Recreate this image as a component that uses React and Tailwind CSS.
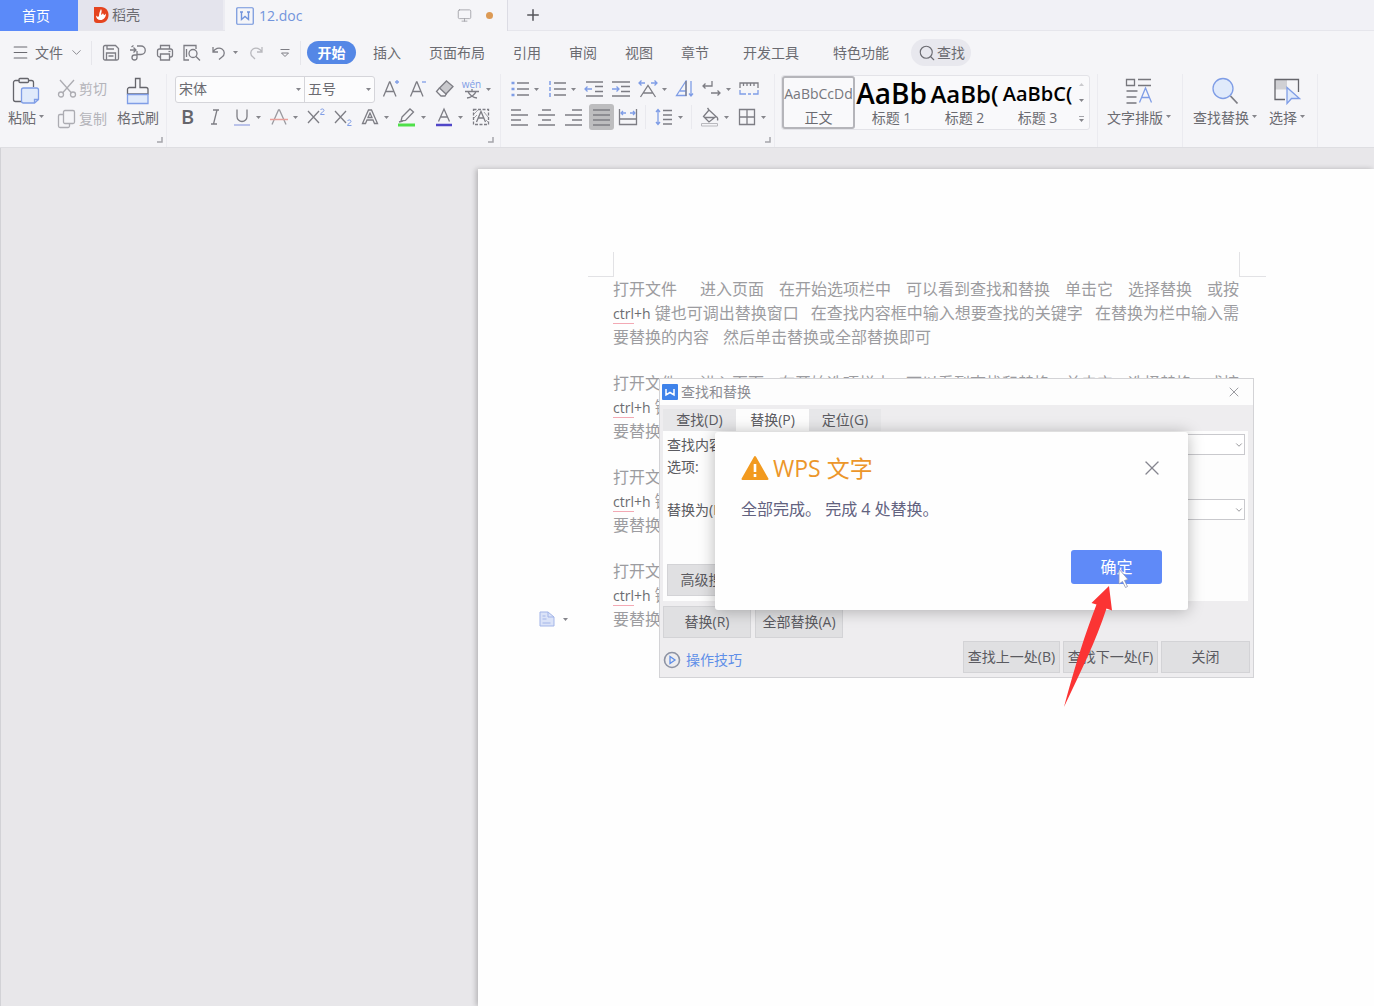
import { ChevronDown, Menu, Monitor, Plus, Search, X } from 'lucide-react';

const GRAY = '#7d7d84';
const BLUE = '#7f9de6';

const Svg = ({ w = 20, h = 20, children, className = '' }) => (
  <svg
    width={w}
    height={h}
    viewBox={`0 0 ${w} ${h}`}
    fill="none"
    stroke={GRAY}
    strokeWidth="1.3"
    className={`shrink-0 ${className}`}
    aria-hidden="true"
  >
    {children}
  </svg>
);

const Caret = ({ className = '' }) => (
  <svg width="5" height="3" viewBox="0 0 5 3" className={`shrink-0 ${className}`} aria-hidden="true">
    <path d="M0 0h5L2.5 3z" fill="#85858b" />
  </svg>
);

const Tool = ({ label, caret, active, children }) => (
  <button
    type="button"
    aria-label={label}
    className={`flex h-7 shrink-0 items-center pl-[2px] ${caret ? 'w-[37px]' : 'w-[27px]'}`}
  >
    <span
      className={`flex justify-center rounded-[3px] ${active ? 'h-[26px] w-[25px] items-center bg-[#bdbdbf]' : 'w-[23px]'}`}
    >
      {children}
    </span>
    {caret && <Caret className="ml-[3px]" />}
  </button>
);

const Rule = () => <span className="mx-1 h-6 w-px shrink-0 bg-[#e9e9ee]" />;

const Launcher = () => (
  <button type="button" aria-label="更多设置" className="mt-[6px] mr-[3px] self-end">
    <svg width="6" height="6" viewBox="0 0 6 6" aria-hidden="true">
      <path d="M5 0v5H0" fill="none" stroke="#a5a5ab" strokeWidth="1.5" />
    </svg>
  </button>
);

/* ---------- quick access icons ---------- */

const SaveIcon = () => (
  <Svg w={18} h={18}>
    <path d="M3 1.5h10.5l3 3v10a1.5 1.5 0 0 1-1.5 1.5H3A1.5 1.5 0 0 1 1.5 14.5V3A1.5 1.5 0 0 1 3 1.5z" />
    <path d="M5 1.5v3.5h7M4.5 16V9h9v7M6.5 12h5" />
  </Svg>
);

const ExportIcon = () => (
  <Svg w={18} h={18}>
    <path d="M1 6h6M4.5 3.5L7 6 4.5 8.5M2.5 3l2-1.5M8 2h4a4.2 4.2 0 0 1 0 8.5H8" />
    <path d="M8 7v6.5a2.5 2.5 0 1 1-2.5-2.5H8" />
  </Svg>
);

const PrintIcon = () => (
  <Svg w={18} h={18}>
    <path d="M4.5 5V1.5h9V5" />
    <rect x="1.5" y="5" width="15" height="8" rx="2" />
    <path d="M4.5 10h9v6h-9z" fill="#f5f5f8" />
    <path d="M12.5 7.5h2" />
  </Svg>
);

const PreviewIcon = () => (
  <Svg w={19} h={18}>
    <path d="M7 16H2V1.5h12V5" />
    <circle cx="11" cy="9.5" r="4" />
    <path d="M14 12.5l4 4M4.5 5v8" />
  </Svg>
);

const UndoIcon = () => (
  <Svg w={16} h={16}>
    <path d="M2 2v5h5M2 7c2-3.5 6-5 9-3s3 6 0 8l-3 2.5" />
  </Svg>
);

const RedoIcon = () => (
  <Svg w={16} h={16} className="opacity-50">
    <path d="M14 2v5H9M14 7c-2-3.5-6-5-9-3s-3 6 0 8l2 2" />
  </Svg>
);

/* ---------- ribbon icons ---------- */

const PasteIcon = () => (
  <Svg w={28} h={28}>
    <path d="M7.5 3.5h-4a2 2 0 0 0-2 2v17a2 2 0 0 0 2 2h6M16 3.5h3.5a2 2 0 0 1 2 2V10" stroke="#65656b" />
    <rect x="7" y="1.5" width="9.5" height="4" rx="1" stroke="#65656b" />
    <path d="M11.5 11h13a2 2 0 0 1 2 2v9.5l-4 3.5H11.5a2 2 0 0 1-2-2V13a2 2 0 0 1 2-2z" fill="#e0eafb" stroke={BLUE} />
    <path d="M22.5 26v-3.5h4" stroke={BLUE} />
  </Svg>
);

const CutIcon = () => (
  <Svg w={20} h={20} className="opacity-60">
    <path d="M3 1l11.5 13M17 1L5.5 14" />
    <circle cx="4" cy="15.5" r="2.5" />
    <circle cx="16" cy="15.5" r="2.5" />
  </Svg>
);

const CopyIcon = () => (
  <Svg w={20} h={20} className="opacity-60">
    <rect x="6.5" y="1.5" width="11" height="13" rx="1.5" />
    <path d="M6 5.5H3A1.5 1.5 0 0 0 1.5 7v10A1.5 1.5 0 0 0 3 18.5h8a1.5 1.5 0 0 0 1.5-1.5v-2" />
  </Svg>
);

const BrushIcon = () => (
  <Svg w={24} h={28}>
    <path d="M9.5 1.5h4.5v9h6a2 2 0 0 1 2 2v4.5H1.5v-4.5a2 2 0 0 1 2-2h6z" stroke="#65656b" />
    <path d="M1.5 17.5h20.5v9H1.5z" fill="#e0eafb" stroke={BLUE} />
  </Svg>
);

const GrowIcon = ({ minus }) => (
  <Svg w={18} h={20}>
    <path d="M1.5 17.5L7.5 3h.5l6 14.5M3.5 12.5h8.5" />
    <path d={minus ? 'M13 3h4' : 'M13 3h4M15 1v4'} stroke={BLUE} />
  </Svg>
);

const EraserIcon = () => (
  <Svg w={20} h={20}>
    <path d="M11.5 2l6.5 5.5L11 15 4.5 9z" fill="#c9c9cd" />
    <path d="M4.5 9L1.5 12.5 6 17h4l1.5-2.5" />
  </Svg>
);

const PinyinIcon = () => (
  <span className="flex flex-col items-center">
    <span className="text-[10px] leading-[9px] text-[#7f9de6]">wén</span>
    <Svg w={16} h={10}>
      <path d="M8 0v2M1 2.5h14M4 2.5c1 3 5 6 9 6.5M12 2.5c-1 3-5 6-9 6.5" />
    </Svg>
  </span>
);

const UnderlineIcon = () => (
  <Svg w={18} h={20}>
    <path d="M4 2.5v7a5 5 0 0 0 10 0v-7" />
    <path d="M1 18h16" stroke="#9aa6e2" />
  </Svg>
);

const StrikeIcon = () => (
  <Svg w={20} h={20}>
    <path d="M3 17.5L9.5 3h1L17 17.5" stroke="#9a9aa0" />
    <path d="M1 12.5h18" stroke="#e8a09b" strokeWidth="1.5" />
  </Svg>
);

const ScriptIcon = ({ sub }) => (
  <Svg w={20} h={20}>
    <path d="M2 4l11 12M13 4L2 16" />
    <path
      d={sub ? 'M14.5 14c.5-1.5 3.5-1.5 3.5.5 0 1.5-3.5 2-3.5 4h4' : 'M14.5 3c.5-1.5 3.5-1.5 3.5.5 0 1.5-3.5 2-3.5 4h4'}
      stroke={BLUE}
      strokeWidth="1"
    />
  </Svg>
);

const OutlineAIcon = () => (
  <Svg w={18} h={20}>
    <path d="M1.5 16.5L7.5 3h3l6 13.5h-3l-1.5-3.5H6L4.5 16.5zM7 10.5L9 6l2 4.5z" />
  </Svg>
);

const HighlightIcon = () => (
  <Svg w={20} h={20}>
    <path d="M5 10l8-8 3.5 3-8 8.5L4 14zM2 15l4-1" />
    <path d="M1 18h17" stroke="#4fe04a" strokeWidth="3" />
  </Svg>
);

const FontColorIcon = () => (
  <Svg w={18} h={20}>
    <path d="M3.5 14.5L9 2l5.5 12.5M5.5 10h7" />
    <path d="M1 18h16" stroke="#5046c8" strokeWidth="2.5" />
  </Svg>
);

const ShadeIcon = () => (
  <Svg w={18} h={18}>
    <rect x="1.5" y="1.5" width="15" height="15" strokeDasharray="3 1.5" />
    <path d="M4.5 14L9 3.5l4.5 10.5M6.5 10h5" />
    <path d="M2 6l4-4M2 10l3-3M16 9l-4-5M16 14l-2-2" strokeWidth=".7" />
  </Svg>
);

const BulletIcon = ({ numbered }) => (
  <Svg w={20} h={18}>
    <path d="M7 3h12M7 9h12M7 15h12" />
    <path d={numbered ? 'M3 1v4M3 7v4M3 13v4' : 'M1.5 3h3M1.5 9h3M1.5 15h3'} stroke={BLUE} strokeWidth={numbered ? 1.5 : 2.5} />
  </Svg>
);

const IndentIcon = ({ right }) => (
  <Svg w={20} h={18}>
    <path d={right ? 'M1 2h18M10 6.5h9M10 11.5h9M1 16h18' : 'M2 2h17M11 6.5h8M11 11.5h8M2 16h17'} />
    <path d={right ? 'M1 9h7M5.5 6.5L8 9l-2.5 2.5' : 'M8 9H1M3.5 6.5L1 9l2.5 2.5'} stroke={BLUE} />
  </Svg>
);

const ScaleIcon = () => (
  <Svg w={20} h={18}>
    <path d="M2.5 17L10 5.5 17.5 17M5.5 13h9" />
    <path d="M1 3h6M3.5 .5L1 3l2.5 2.5M13 3h6M16.5 .5L19 3l-2.5 2.5" stroke={BLUE} />
  </Svg>
);

const SortIcon = () => (
  <Svg w={20} h={18}>
    <path d="M11 1L1.5 15.5H11zM5 11h6" stroke={BLUE} />
    <path d="M11 1v15" />
    <path d="M16 1v15M14 13.5l2 2.5 2-2.5" stroke={BLUE} />
  </Svg>
);

const WrapIcon = () => (
  <Svg w={20} h={18}>
    <path d="M10 1v5H1M3.5 3.5L1 6l2.5 2.5M9 13h9M15.5 10.5L18 13l-2.5 2.5" />
  </Svg>
);

const RulerIcon = () => (
  <Svg w={20} h={16}>
    <path d="M1 7V2h18v5M4.5 2v3M8 2v3M11.5 2v3M15 2v3" />
    <path d="M1 9v4h6M9 13h3M19 9v4h-5" stroke={BLUE} />
  </Svg>
);

const alignPaths = {
  left: 'M1 2h10M1 7h17M1 12h10M1 17h17',
  center: 'M5 2h9M1 7h17M5 12h9M1 17h17',
  right: 'M8 2h10M1 7h17M8 12h10M1 17h17',
  justify: 'M1 2h17M1 7h17M1 12h17M1 17h17',
};

const AlignIcon = ({ type }) => (
  <Svg w={19} h={19}>
    <path d={alignPaths[type]} />
  </Svg>
);

const DistributeIcon = () => (
  <Svg w={20} h={18}>
    <path d="M1.5 1v15.5h17V1M1.5 11h17" />
    <path d="M3 5h5M5 3L3 5l2 2M17 5h-5M15 3l2 2-2 2" stroke={BLUE} />
  </Svg>
);

const SpacingIcon = () => (
  <Svg w={18} h={18}>
    <path d="M8 2.5h9M8 7h9M8 11.5h9M8 16h9" />
    <path d="M3 1.5v15M1 4l2-2.5L5 4M1 14l2 2.5L5 14" stroke={BLUE} />
  </Svg>
);

const FillIcon = () => (
  <Svg w={20} h={20}>
    <path d="M9 3l7 6.5-7 5.5-5.5-5.5zM9 3L7.5 1M16 9.5c2 1 2 2.5 1.5 4M4.5 10.5H15" />
    <path d="M1.5 16.5h16v2.5h-16z" stroke="#b9b9be" strokeWidth="1" />
  </Svg>
);

const BorderIcon = () => (
  <Svg w={18} h={18}>
    <path d="M1.5 1.5h15v15h-15zM9 1.5v15M1.5 9h15" />
  </Svg>
);

const TypesetIcon = () => (
  <Svg w={28} h={28}>
    <path d="M1.5 2.5h8v6h-8zM13 2.5h13M13 8.5h13M1.5 14h11M1.5 20h10M1.5 26h10" stroke="#77777d" />
    <path d="M14.5 25.5L20.5 11l6 14.5M16.5 20.5h8" stroke={BLUE} />
  </Svg>
);

const FindIcon = () => (
  <Svg w={28} h={28}>
    <path d="M19.5 19l7 7.5" strokeWidth="1.8" />
    <circle cx="12" cy="11.5" r="10" fill="#e0eafb" stroke={BLUE} />
  </Svg>
);

const SelectIcon = () => (
  <Svg w={28} h={28}>
    <path d="M2 2.5h12v10H2z" fill="#d0d0d4" stroke="none" />
    <path d="M12 22.5H2v-20h23.5V15" stroke="#65656b" />
    <path d="M14 10.5v16l4.5-5h8z" fill="#e0eafb" stroke={BLUE} />
  </Svg>
);

const WpsMark = () => (
  <svg width="18" height="18" viewBox="0 0 18 18" fill="none" stroke="currentColor" aria-hidden="true">
    <rect x=".75" y=".75" width="16.5" height="16.5" rx="1" strokeWidth="1.2" />
    <path d="M5.5 5v7.5L9 9.5l3.5 3V5M4 5h3M11 5h3" strokeWidth="1.4" />
  </svg>
);

/* ---------- top bars ---------- */

const TabBar = () => (
  <div className="flex h-[31px] items-stretch border-b border-[#e6e6ec] bg-[#f1f1f6]">
    <button type="button" className="-mb-px w-[78px] bg-[#5b8af9] pr-1.5 text-center text-white">
      首页
    </button>
    <button type="button" className="flex w-[147px] items-center gap-[3px] border-r-2 border-[#ececf2] bg-[#e4e4ed] pl-[15px]">
      <svg width="16" height="18" viewBox="0 0 16 18" aria-hidden="true">
        <path d="M1 1h7c5 0 7.5 4 7.5 8s-2.5 8-7.5 8H4c-2 0-3-1-3-3z" fill="#e5441f" />
        <path d="M8 3c1.5 2 0 4 0 6 1-.5 1.5-1 2-2 1 3 2 2 3 .5 0 4-2.5 6.5-5.5 6.5S3 12 3 9.5c1.5 1.5 2.5 1.5 3 .5C6 7 7 5 8 3z" fill="#fff" />
      </svg>
      稻壳
    </button>
    <div className="-mb-px flex w-[283px] items-center border-r border-[#dcdce4] bg-[#f5f5f8] pr-[14px] pl-[11px]">
      <button type="button" className="flex flex-1 items-center gap-[5px] text-[#7294dc]">
        <WpsMark />
        12.doc
      </button>
      <Monitor size={15} strokeWidth={1.3} color="#9b9ba1" />
      <span className="ml-[14px] h-[7px] w-[7px] rounded-full bg-[#dc9a55]" />
    </div>
    <button type="button" aria-label="新建" className="px-4">
      <Plus size={18} strokeWidth={2} color="#55555b" />
    </button>
  </div>
);

const menus = ['插入', '页面布局', '引用', '审阅', '视图', '章节'];

const MenuBar = () => (
  <nav className="flex h-[43px] items-center whitespace-nowrap">
    <button type="button" className="flex items-center pl-[11px]">
      <Menu size={19} strokeWidth={1.3} className="mr-[5px]" />
      文件
      <ChevronDown size={15} strokeWidth={1.2} className="ml-1.5" />
    </button>
    <span className="mr-[5px] ml-[7px] h-6 w-px bg-[#e6e6eb]" />
    <div className="flex items-center">
      <Tool label="保存"><SaveIcon /></Tool>
      <Tool label="输出"><ExportIcon /></Tool>
      <Tool label="打印"><PrintIcon /></Tool>
      <Tool label="预览"><PreviewIcon /></Tool>
      <Tool label="撤销" caret><UndoIcon /></Tool>
      <Tool label="恢复"><RedoIcon /></Tool>
      <button type="button" aria-label="自定义" className="ml-[5px] px-1.5">
        <Svg w={10} h={10}>
          <path d="M.5 1.5h9M1.5 5h7L5 8.5z" strokeWidth="1" />
        </Svg>
      </button>
    </div>
    <span className="mr-1.5 ml-1 h-6 w-px bg-[#e6e6eb]" />
    <button type="button" className="h-[23px] w-[49px] rounded-full bg-[#5487e6] font-bold text-white">
      开始
    </button>
    <div className="ml-[17px] flex gap-7">
      {menus.map((name) => (
        <button type="button" key={name}>{name}</button>
      ))}
    </div>
    <div className="mx-[34px] flex gap-[34px]">
      <button type="button">开发工具</button>
      <button type="button">特色功能</button>
    </div>
    <button type="button" className="-ml-3 flex h-[27px] items-center gap-px rounded-full bg-[#e8e8ee] pr-1.5 pl-[7px]">
      <Search size={18} strokeWidth={1.5} />
      查找
    </button>
  </nav>
);

const FontBox = ({ label, value, className }) => (
  <label className={`flex items-center ${className}`}>
    <select aria-label={label} defaultValue={value} className="h-full w-full appearance-none pl-[3px] outline-none">
      <option>{value}</option>
    </select>
    <Caret className="pointer-events-none mr-[3px]" />
  </label>
);

const styles = [
  { name: '正文', sample: 'AaBbCcDd', size: 'text-[14px] text-[#77777d]', active: true },
  { name: '标题 1', sample: 'AaBb', size: 'text-[28px] font-semibold text-black' },
  { name: '标题 2', sample: 'AaBb(', size: 'text-[24px] font-semibold text-black' },
  { name: '标题 3', sample: 'AaBbC(', size: 'text-[20px] font-semibold text-black' },
];

const BigTool = ({ icon, label }) => (
  <button type="button" className="flex flex-col items-center gap-px">
    {icon}
    <span className="flex items-center gap-[3px] leading-6">
      {label}
      <Caret className="mb-1" />
    </span>
  </button>
);

const Ribbon = () => (
  <div className="flex h-[74px] border-b border-[#dedee2] whitespace-nowrap">
    <section className="flex w-[167px] flex-col border-r border-[#ebebf0] pt-px">
      <div className="flex h-14 pl-2">
        <div className="flex w-[49px] flex-col items-start pt-0.5">
          <button type="button" className="flex flex-col gap-px">
            <span className="pl-1"><PasteIcon /></span>
            <span className="flex items-center gap-[3px] leading-6">粘贴<Caret className="mb-1" /></span>
          </button>
        </div>
        <div className="flex w-[60px] flex-col justify-between text-[#b4b4ba]">
          <button type="button" className="flex h-7 items-center gap-0.5"><CutIcon />剪切</button>
          <button type="button" className="flex h-6 items-center gap-0.5"><CopyIcon />复制</button>
        </div>
        <button type="button" className="flex flex-col items-center gap-px pt-0.5">
          <BrushIcon />
          <span className="leading-6">格式刷</span>
        </button>
      </div>
      <Launcher />
    </section>

    <section className="flex w-[334px] flex-col border-r border-[#ebebf0] pt-px pr-[3px] pl-[7px]">
      <div className="flex h-7 items-center">
        <div className="mr-0.5 ml-px flex h-[27px] w-[200px] rounded-[3px] border border-[#d5d5da] bg-[#fcfcfd]">
          <FontBox label="字体" value="宋体" className="w-[129px] border-r border-[#d5d5da]" />
          <FontBox label="字号" value="五号" className="flex-1" />
        </div>
        <Tool label="增大字号"><GrowIcon /></Tool>
        <Tool label="减小字号"><GrowIcon minus /></Tool>
        <Tool label="清除格式"><EraserIcon /></Tool>
        <Tool label="拼音指南" caret><PinyinIcon /></Tool>
      </div>
      <div className="flex h-7 items-center">
        <Tool label="加粗"><span className="text-[20px] leading-5 font-semibold text-[#65656b]">B</span></Tool>
        <Tool label="倾斜">
          <Svg w={14} h={20}><path d="M5 3h6M3 17h6M9 3L5.5 17" /></Svg>
        </Tool>
        <Tool label="下划线" caret><UnderlineIcon /></Tool>
        <Tool label="删除线" caret><StrikeIcon /></Tool>
        <Tool label="上标"><ScriptIcon /></Tool>
        <Tool label="下标"><ScriptIcon sub /></Tool>
        <Tool label="文字效果" caret><OutlineAIcon /></Tool>
        <Tool label="突出显示" caret><HighlightIcon /></Tool>
        <Tool label="字体颜色" caret><FontColorIcon /></Tool>
        <Tool label="字符底纹"><ShadeIcon /></Tool>
      </div>
      <Launcher />
    </section>

    <section className="flex w-[274px] flex-col border-r border-[#ebebf0] pt-px pl-[5px]">
      <div className="flex h-7 items-center">
        <Tool label="项目符号" caret><BulletIcon /></Tool>
        <Tool label="编号" caret><BulletIcon numbered /></Tool>
        <Tool label="减少缩进"><IndentIcon /></Tool>
        <Tool label="增加缩进"><IndentIcon right /></Tool>
        <Tool label="中文版式" caret><ScaleIcon /></Tool>
        <Tool label="排序"><SortIcon /></Tool>
        <Tool label="换行标记" caret><WrapIcon /></Tool>
        <Tool label="制表位"><RulerIcon /></Tool>
      </div>
      <div className="flex h-7 items-center">
        <Tool label="左对齐"><AlignIcon type="left" /></Tool>
        <Tool label="居中"><AlignIcon type="center" /></Tool>
        <Tool label="右对齐"><AlignIcon type="right" /></Tool>
        <Tool label="两端对齐" active><AlignIcon type="justify" /></Tool>
        <Tool label="分散对齐"><DistributeIcon /></Tool>
        <Rule />
        <Tool label="行距" caret><SpacingIcon /></Tool>
        <Rule />
        <Tool label="底纹" caret><FillIcon /></Tool>
        <Tool label="边框" caret><BorderIcon /></Tool>
      </div>
      <Launcher />
    </section>

    <section className="w-[323px] border-r border-[#ebebf0] pt-px pl-1.5">
      <div className="flex h-[55px] w-[309px] rounded-[3px] border border-[#e3e3e8] bg-[#f9f9fb]">
        {styles.map((style) => (
          <button
            type="button"
            key={style.name}
            className={`flex w-[73px] flex-col items-center ${style.active ? 'rounded-[3px] border-2 border-[#b5b5ba]' : 'py-0.5'}`}
          >
            <span className={`flex h-[31px] justify-center leading-[31px] ${style.size}`}>
              {style.sample}
            </span>
            <span className="leading-[18px]">{style.name}</span>
          </button>
        ))}
        <div className="flex flex-1 flex-col items-center justify-around">
          <button type="button" aria-label="上一行"><Caret className="rotate-180 opacity-40" /></button>
          <button type="button" aria-label="下一行"><Caret /></button>
          <button type="button" aria-label="更多样式" className="border-t border-[#a5a5ab] pt-0.5"><Caret /></button>
        </div>
      </div>
    </section>

    <section className="w-[85px] border-r border-[#ebebf0] pt-[3px] pl-[9px]">
      <BigTool icon={<TypesetIcon />} label="文字排版" />
    </section>
    <section className="flex w-[135px] gap-3 border-r border-[#ebebf0] pt-[3px] pl-[10px]">
      <BigTool icon={<FindIcon />} label="查找替换" />
      <BigTool icon={<SelectIcon />} label="选择" />
    </section>
  </div>
);

/* ---------- document ---------- */

const Paragraph = () => (
  <div className="mb-[22px] text-[16px] leading-6 whitespace-nowrap text-[#9c9ca0]">
    <div className="flex justify-between">
      <span className="pr-2">打开文件</span>
      <span>进入页面</span>
      <span>在开始选项栏中</span>
      <span>可以看到查找和替换</span>
      <span>单击它</span>
      <span>选择替换</span>
      <span>或按</span>
    </div>
    <div className="flex justify-between">
      <span>
        <span className="text-[14px] leading-4 text-[#6c6c71]">
          <span className="border-b border-[#f3a9b4]">ctrl</span>+h
        </span>{' '}
        键也可调出替换窗口
      </span>
      <span>在查找内容框中输入想要查找的关键字</span>
      <span>在替换为栏中输入需</span>
    </div>
    <div className="flex gap-[14px]">
      <span>要替换的内容</span>
      <span>然后单击替换或全部替换即可</span>
    </div>
  </div>
);

const Page = () => (
  <article className="relative mt-[21px] ml-[477px] flex-1 bg-[#fefefe] pt-[83px] shadow-[-2px_0_5px_rgba(0,0,0,0.22)]">
    <div className="flex h-[25px] justify-between pr-[108px] pl-[110px]">
      <span className="w-[26px] border-r border-b border-[#e2e2e5]" />
      <span className="w-[27px] border-b border-l border-[#e2e2e5]" />
    </div>
    <div className="px-[135px]">
      <Paragraph />
      <Paragraph />
      <Paragraph />
      <Paragraph />
    </div>
    <button type="button" aria-label="粘贴选项" className="absolute top-[442px] left-[61px] flex items-center gap-2">
      <svg width="16" height="16" viewBox="0 0 16 16" aria-hidden="true">
        <path d="M1 1h8l6 5v9H1z" fill="#dbe3f8" stroke="#a3b5e8" />
        <path d="M9 1v5h6M3.5 5h3M3.5 8h4M3.5 12h8" fill="none" stroke="#a3b5e8" />
      </svg>
      <Caret />
    </button>
  </article>
);

/* ---------- find & replace ---------- */

const Field = ({ id, label }) => (
  <div className="flex h-[21px] items-center pr-[3px] pl-1">
    <label htmlFor={id} className="w-[88px] shrink-0">{label}</label>
    <div className="flex h-full flex-1 items-center border border-[#c9c9cd] bg-white">
      <select id={id} className="h-full w-full appearance-none outline-none">
        <option></option>
      </select>
      <ChevronDown size={10} strokeWidth={1.5} className="pointer-events-none shrink-0" />
    </div>
  </div>
);

const DialogButton = ({ children, className }) => (
  <button type="button" className={`border border-[#d3d3d6] bg-[#e0e0e2] ${className}`}>
    {children}
  </button>
);

const ReplaceDialog = () => (
  <div role="dialog" aria-label="查找和替换" className="border border-[#d3d3d6] bg-[#eeedef] whitespace-nowrap text-[#5a5a60]">
    <div className="flex h-[26px] items-center bg-[#fdfdfd] pr-[11px] pl-0.5 text-[#8c8c92]">
      <svg width="16" height="16" viewBox="0 0 16 16" className="mr-[3px]" aria-hidden="true">
        <rect width="16" height="16" rx="1" fill="#3f83ea" />
        <path d="M4 5v6l4-2.5 4 2.5V5" fill="none" stroke="#fff" strokeWidth="1.5" />
      </svg>
      <span className="flex-1">查找和替换</span>
      <button type="button" aria-label="关闭"><X size={16} strokeWidth={1.3} /></button>
    </div>
    <div className="flex h-[26px] items-end pl-[3px]">
      <button type="button" className="h-[22px] w-[73px] bg-[#e7e7e9]">查找(D)</button>
      <button type="button" className="h-[22px] w-[73px] bg-[#fdfdfd]">替换(P)</button>
      <button type="button" className="h-[22px] w-[72px] bg-[#e7e7e9]">定位(G)</button>
    </div>
    <div className="mr-[5px] ml-[3px] bg-[#fdfdfd] pt-[3px] pb-[5px]">
      <Field id="find" label="查找内容(N):" />
      <p className="mb-5 pl-1 leading-6">选项:</p>
      <Field id="replace" label="替换为(I):" />
      <DialogButton className="mt-11 ml-1 h-8 w-[104px]">高级搜索(M)</DialogButton>
    </div>
    <div className="mt-[5px] ml-[3px] flex gap-1">
      <DialogButton className="h-8 w-[88px]">替换(R)</DialogButton>
      <DialogButton className="h-8 w-[88px]">全部替换(A)</DialogButton>
    </div>
    <div className="mt-[3px] flex items-center gap-[3px] pr-[3px] pb-1 pl-[3px]">
      <a href="#tips" className="flex flex-1 items-center gap-[5px] pt-1.5 text-[#5f8fe8]">
        <svg width="18" height="18" viewBox="0 0 18 18" fill="none" aria-hidden="true">
          <circle cx="9" cy="9" r="7.5" stroke="#8d93a3" strokeWidth="1.6" />
          <path d="M7 5.5v7L12 9z" stroke="#5f8fe8" strokeWidth="1.3" />
        </svg>
        操作技巧
      </a>
      <DialogButton className="h-8 w-[97px]">查找上一处(B)</DialogButton>
      <DialogButton className="h-8 w-[95px]">查找下一处(F)</DialogButton>
      <DialogButton className="h-8 w-[89px]">关闭</DialogButton>
    </div>
  </div>
);

const MessageBox = () => (
  <div
    role="alertdialog"
    aria-label="WPS 文字"
    className="absolute top-[54px] left-14 w-[473px] rounded-[3px] bg-[#fefefe] pt-5 pb-[26px] pl-[26px] shadow-[0_1px_16px_rgba(0,0,0,0.28)]"
  >
    <div className="flex h-8 items-center pr-6">
      <svg width="28" height="26" viewBox="0 0 28 26" className="mr-1" aria-hidden="true">
        <path d="M14 2L26.5 24h-25z" fill="#f29a1f" stroke="#f29a1f" strokeWidth="2" strokeLinejoin="round" />
        <path d="M14 9v8M14 19v3" stroke="#fff" strokeWidth="2.6" />
      </svg>
      <h2 className="flex-1 text-[23px] leading-8 text-[#ec962a]">WPS 文字</h2>
      <button type="button" aria-label="关闭">
        <X size={24} strokeWidth={1.3} color="#85858f" />
      </button>
    </div>
    <p className="mt-[13px] mb-[29px] text-[16px] leading-6 text-[#62627f]">全部完成。 完成 4 处替换。</p>
    <div className="flex justify-end pr-[26px]">
      <button type="button" className="h-[34px] w-[91px] rounded-[3px] bg-[#5f8af8] text-[16px] text-white">
        确定
      </button>
    </div>
  </div>
);

const Pointer = () => (
  <svg width="65" height="142" viewBox="0 0 65 142" className="pointer-events-none absolute top-[190px] left-[404px]" aria-hidden="true">
    <path d="M56 1v15l3.5-2.5 3 6 2-1-3-6 3.5-1z" fill="#fff" stroke="#8e96b5" strokeWidth=".8" />
    <path d="M46 18L28.5 35l5 1.5C22 66 12 98 1 139c17-36 32-66 42.5-98.5l5.5 2z" fill="#fb3434" />
  </svg>
);

export default function App() {
  return (
    <div className="flex min-h-screen flex-col overflow-hidden bg-[#f5f5f8] font-['Open_Sans','Noto_Sans_CJK_SC',sans-serif] text-[14px] leading-5 text-[#6b6b71]">
      <header>
        <TabBar />
        <MenuBar />
        <Ribbon />
      </header>
      <main className="relative flex flex-1 flex-col border-l border-[#d2d2d6] bg-[#e8e7ea]">
        <Page />
        <div className="absolute top-[230px] left-[658px] w-[595px]">
          <ReplaceDialog />
          <MessageBox />
          <Pointer />
        </div>
      </main>
    </div>
  );
}
